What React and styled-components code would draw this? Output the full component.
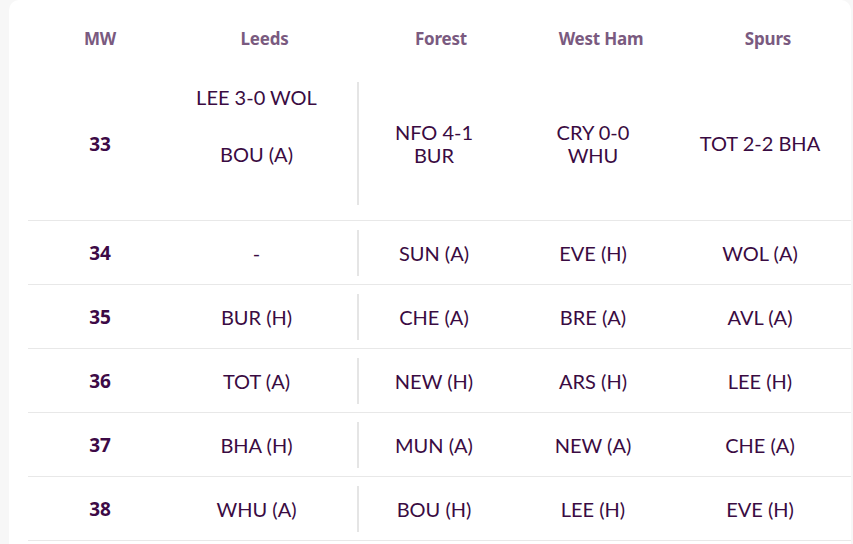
import styled, { createGlobalStyle } from 'styled-components';

const GlobalStyle = createGlobalStyle`
  html, body {
    margin: 0;
    padding: 0;
    background: #f7f7f7;
  }
  body {
    font-family: 'Lato', 'Liberation Sans', sans-serif;
  }
`

const columns = ['Leeds', 'Forest', 'West Ham', 'Spurs'];

const rows = [
    { mw: 33, tall: true, cells: [['LEE 3-0 WOL', 'BOU (A)'], ['NFO 4-1\nBUR'], ['CRY 0-0\nWHU'], ['TOT 2-2 BHA']] },
    { mw: 34, cells: [['-'], ['SUN (A)'], ['EVE (H)'], ['WOL (A)']] },
    { mw: 35, cells: [['BUR (H)'], ['CHE (A)'], ['BRE (A)'], ['AVL (A)']] },
    { mw: 36, cells: [['TOT (A)'], ['NEW (H)'], ['ARS (H)'], ['LEE (H)']] },
    { mw: 37, cells: [['BHA (H)'], ['MUN (A)'], ['NEW (A)'], ['CHE (A)']] },
    { mw: 38, cells: [['WHU (A)'], ['BOU (H)'], ['LEE (H)'], ['EVE (H)']] },
];

export default function App(){
    return(
        <>
            <GlobalStyle />
            <Card>
                <Table>
                    <HeaderRow>
                        <HeaderCell>MW</HeaderCell>
                        {columns.map(c => <HeaderCell key={c}>{c}</HeaderCell>)}
                    </HeaderRow>
                    {rows.map(r => (
                        <Row key={r.mw} $tall={r.tall}>
                            <WeekCell $tall={r.tall}>{r.mw}</WeekCell>
                            {r.cells.map((fixtures, i) => (
                                <Cell key={i} $tall={r.tall} $stacked={fixtures.length > 1} $divider={i === 1}>
                                    {fixtures.map(f => <Fixture key={f}>{f}</Fixture>)}
                                </Cell>
                            ))}
                        </Row>
                    ))}
                </Table>
            </Card>
        </>
    )
}

const Card = styled.div`
    margin-left: 9px;
    width: 842px;
    height: 544px;
    background: #fff;
    border-radius: 10px 10px 0 0;
    overflow: hidden;
    padding-left: 19px;
    box-sizing: border-box;
`
const Table = styled.div`
    width: 831px;
`
const grid = `
    display: grid;
    grid-template-columns: 144px 185px 168px 152px 182px;
`
const HeaderRow = styled.div`
    ${grid}
    height: 73px;
`
const HeaderCell = styled.div`
    padding-top: 28px;
    text-align: center;
    font-family: 'Noto Sans', sans-serif;
    font-weight: 700;
    font-size: 17px;
    line-height: 22px;
    letter-spacing: -0.2px;
    color: #7a5a80;
`
const Row = styled.div`
    ${grid}
    border-bottom: 1px solid #e8e8e8;
    padding-bottom: ${p => p.$tall ? '7px' : '0'};
`
const WeekCell = styled.div`
    display: flex;
    align-items: center;
    justify-content: center;
    height: ${p => p.$tall ? '123px' : '46px'};
    margin: 9px 0 8px;
    font-family: 'Noto Sans', sans-serif;
    font-weight: 700;
    font-size: 19px;
    color: #3d0a46;
`
const Cell = styled.div`
    display: flex;
    flex-direction: column;
    align-items: center;
    justify-content: ${p => p.$stacked ? 'flex-start' : 'center'};
    gap: 34px;
    height: ${p => p.$tall ? '123px' : '46px'};
    box-sizing: border-box;
    margin: 9px 0 8px;
    padding: ${p => p.$stacked ? '4px' : '0'} 16px 0 0;
    border-left: ${p => p.$divider ? '2px solid #e5e5e5' : 'none'};
`
const Fixture = styled.div`
    white-space: pre-line;
    text-align: center;
    font-weight: 400;
    font-size: 20px;
    line-height: 23px;
    color: #3a0b42;
`
